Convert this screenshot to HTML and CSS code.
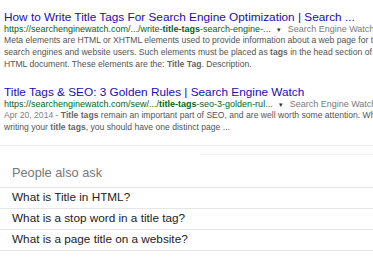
FILE: index.html
```html
<!DOCTYPE html>
<html lang="en">
<head>
    <meta charset="UTF-8">
    <meta name="viewport" content="width=device-width, initial-scale=1.0">
    <title>title tags - Search</title>
    <link rel="stylesheet" href="styles.css">
</head>
<body>

<!-- results -->
<div class="result first">
    <a class="r-title" href="#">How to Write Title Tags For Search Engine Optimization | Search ...</a>
    <div class="r-url">https://searchenginewatch.com/.../write-<b>title-tags</b>-search-engine-... <span class="arrow">&#9662;</span> <span class="source">Search Engine Watch</span></div>
    <div class="r-snippet">
        <div class="line">Meta elements are HTML or XHTML elements used to provide information about a web page for the</div>
        <div class="line">search engines and website users. Such elements must be placed as <b>tags</b> in the head section of an</div>
        <div class="line">HTML document. These elements are the: <b>Title Tag</b>. Description.</div>
    </div>
</div>

<div class="result">
    <a class="r-title" href="#">Title Tags &amp; SEO: 3 Golden Rules | Search Engine Watch</a>
    <div class="r-url">https://searchenginewatch.com/sew/.../<b>title-tags</b>-seo-3-golden-rul... <span class="arrow">&#9662;</span> <span class="source">Search Engine Watch</span></div>
    <div class="r-snippet">
        <div class="line"><span class="date">Apr 20, 2014 - </span><b>Title tags</b> remain an important part of SEO, and are well worth some attention. When</div>
        <div class="line">writing your <b>title tags</b>, you should have one distinct page ...</div>
    </div>
</div>

<!-- people also ask -->
<div class="paa">
    <div class="paa-head">People also ask</div>
    <div class="question">What is Title in HTML?</div>
    <div class="question">What is a stop word in a title tag?</div>
    <div class="question">What is a page title on a website?</div>
</div>

</body>
</html>
```

FILE: styles.css
```css
body {
    margin: 0;
    font-family: "Liberation Sans", Arial, sans-serif;
    background: #fff;
    overflow: hidden;
    width: 373px;
}
.result {
    padding-left: 4px;
    margin-top: 14px;
}
.result.first {
    margin-top: 9px;
}
.r-title {
    display: block;
    font-size: 11.8px;
    line-height: 16px;
    color: #1a0dab;
    text-decoration: none;
    white-space: nowrap;
}
.r-url {
    font-size: 9px;
    line-height: 9px;
    color: #006621;
    white-space: nowrap;
}
.r-url .arrow {
    font-size: 7px;
    color: #333;
    margin: 0 4px 0 4px;
}
.r-url .source {
    color: #7a7a7a;
}
.r-snippet {
    font-size: 8.6px;
    line-height: 12px;
    color: #545454;
}
.r-snippet .line {
    white-space: nowrap;
}
.r-snippet b {
    color: #666;
}
.date {
    color: #808080;
}
.paa {
    margin-top: 12px;
    border-top: 1px solid #ececec;
}
.paa::before {
    content: "";
    display: block;
    height: 1px;
    margin: 8px 0 0 200px;
    background: #f3f3f3;
}
.paa-head {
    padding: 6px 0 2px 12px;
    font-size: 12.75px;
    line-height: 24px;
    color: #777;
}
.question {
    border-top: 1px solid #e6e6e6;
    padding-left: 12px;
    font-size: 11.75px;
    line-height: 18px;
    padding-bottom: 2px;
    color: #222;
}
.question:last-child {
    border-bottom: 1px solid #e6e6e6;
}
```
